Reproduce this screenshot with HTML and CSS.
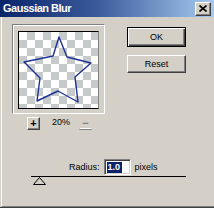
FILE: index.html
```html
<!DOCTYPE html>
<html>
<head>
<meta charset="utf-8">
<link rel="stylesheet" href="styles.css">
</head>
<body>
<div class="window">
  <div class="titlebar">
    <span class="title">Gaussian Blur</span>
    <span class="close">
      <svg width="8" height="7" viewBox="0 0 8 7"><path d="M0.5 0.5 L7.5 6.5 M7.5 0.5 L0.5 6.5" stroke="#000" stroke-width="1.6" fill="none"/></svg>
    </span>
  </div>
  <div class="content">
    <div class="toprow">
      <div class="leftcol">
        <div class="frame">
          <div class="preview">
            <svg class="star" width="79" height="76" viewBox="0 0 79 76">
              <polygon points="40,5 48,25 72,31 56,45 59,70 39,59 18,69 21,46 5,30 34,24" fill="none" stroke="#1e3296" stroke-width="1.4" stroke-linejoin="round"/>
            </svg>
          </div>
        </div>
        <div class="zoomrow">
          <span class="zbtn">+</span>
          <span class="zval">20%</span>
          <span class="zbtn disabled">−</span>
        </div>
      </div>
      <div class="rightcol">
        <div class="btn default"><span>OK</span></div>
        <div class="btn">Reset</div>
      </div>
    </div>
    <div class="radiusrow">
      <span class="lbl">Radius:</span>
      <span class="input"><span class="sel">1.0</span></span>
      <span class="lbl unit">pixels</span>
    </div>
    <div class="slider">
      <svg class="thumb" width="13" height="8" viewBox="0 0 13 8"><polygon points="6.5,0.5 12.5,7.5 0.5,7.5" fill="#d4d0c8" stroke="#000" stroke-width="1"/></svg>
    </div>
  </div>
</div>
</body>
</html>
```
FILE: styles.css
```css
html, body {
  margin: 0;
  padding: 0;
  background: #d4d0c8;
}
.window {
  width: 214px;
  height: 208px;
  background: #d4d0c8;
  display: flex;
  flex-direction: column;
  overflow: hidden;
  border-bottom: 1px solid #404040;
  box-sizing: border-box;
  font-family: "Liberation Sans", Arial, sans-serif;
}
.titlebar {
  height: 17px;
  flex: none;
  display: flex;
  align-items: center;
  justify-content: space-between;
  padding: 0 3px 0 3px;
  background: linear-gradient(to right, #0a246a 0%, #3a5a9a 45%, #a6caf0 100%);
}
.title {
  color: #fff;
  font-weight: bold;
  font-size: 11px;
  letter-spacing: -0.5px;
  line-height: 17px;
}
.close {
  width: 16px;
  height: 14px;
  box-sizing: border-box;
  background: #d4d0c8;
  border: 1px solid;
  border-color: #fff #404040 #404040 #fff;
  box-shadow: inset -1px -1px #808080;
  display: flex;
  align-items: center;
  justify-content: center;
  margin-top: 1px;
}
.close svg {
  display: block;
  margin: 0 1px 1px 0;
}
.content {
  flex: 1;
  margin-left: 1px;
  border-left: 1px solid #fff;
  border-bottom: 1px solid #808080;
  padding: 7px 0 0 10px;
  display: flex;
  flex-direction: column;
}
.toprow {
  display: flex;
}
.leftcol {
  display: flex;
  flex-direction: column;
}
.frame {
  border: 1px solid;
  border-color: #808080 #fff #fff #808080;
  box-shadow: inset 1px 1px #fff;
  padding: 6px 5px 4px 5px;
}
.preview {
  width: 79px;
  height: 76px;
  border: 1px solid #000;
  border-right-color: #808080;
  background-color: #fff;
  background-image:
    linear-gradient(45deg, #c6cacb 25%, transparent 25%, transparent 75%, #c6cacb 75%),
    linear-gradient(45deg, #c6cacb 25%, transparent 25%, transparent 75%, #c6cacb 75%);
  background-size: 16px 16px;
  background-position: 0 0, 8px 8px;
}
.star {
  display: block;
}
.zoomrow {
  display: flex;
  align-items: flex-start;
  margin-top: 3px;
  padding-left: 15px;
  font-size: 9px;
}
.zbtn {
  width: 13px;
  height: 13px;
  box-sizing: border-box;
  border: 1px solid;
  border-color: #fff #404040 #404040 #fff;
  box-shadow: inset -1px -1px #808080;
  display: flex;
  align-items: center;
  justify-content: center;
  font-size: 11px;
  font-weight: bold;
  line-height: 1;
  color: #000;
}
.zbtn.disabled {
  border-color: transparent transparent #808080 transparent;
  box-shadow: inset 0 -1px #fff;
  color: #808080;
  margin-left: 9px;
}
.zval {
  margin-left: 12px;
  line-height: 10px;
  color: #000;
}
.rightcol {
  display: flex;
  flex-direction: column;
  margin-left: 22px;
  padding-top: 3px;
  gap: 8px;
}
.btn {
  width: 59px;
  height: 18px;
  box-sizing: border-box;
  border: 1px solid;
  border-color: #fff #404040 #404040 #fff;
  box-shadow: inset -1px -1px #808080;
  display: flex;
  align-items: center;
  justify-content: center;
  font-size: 9px;
  color: #000;
}
.btn.default {
  height: 20px;
  border: 1px solid #000;
  box-shadow: inset 1px 1px #fff, inset -1px -1px #404040, inset -2px -2px #808080;
}
.radiusrow {
  display: flex;
  align-items: center;
  margin-top: 29px;
  margin-left: 57px;
  font-size: 9px;
  color: #000;
}
.input {
  width: 27px;
  height: 16px;
  box-sizing: border-box;
  margin-left: 4px;
  background: #fff;
  border: 1px solid;
  border-color: #808080 #fff #fff #808080;
  box-shadow: inset 1px 1px #404040, inset -1px -1px #d4d0c8;
  display: flex;
  align-items: center;
  padding-left: 2px;
}
.sel {
  background: #0a246a;
  color: #fff;
  font-weight: bold;
  font-size: 9px;
  line-height: 11px;
  padding: 0 2px 0 1px;
}
.unit {
  margin-left: 4px;
}
.slider {
  margin-left: 19px;
  width: 155px;
  border-top: 1px solid #000;
  margin-top: 1px;
}
.thumb {
  display: block;
  margin-left: 2px;
}
```
